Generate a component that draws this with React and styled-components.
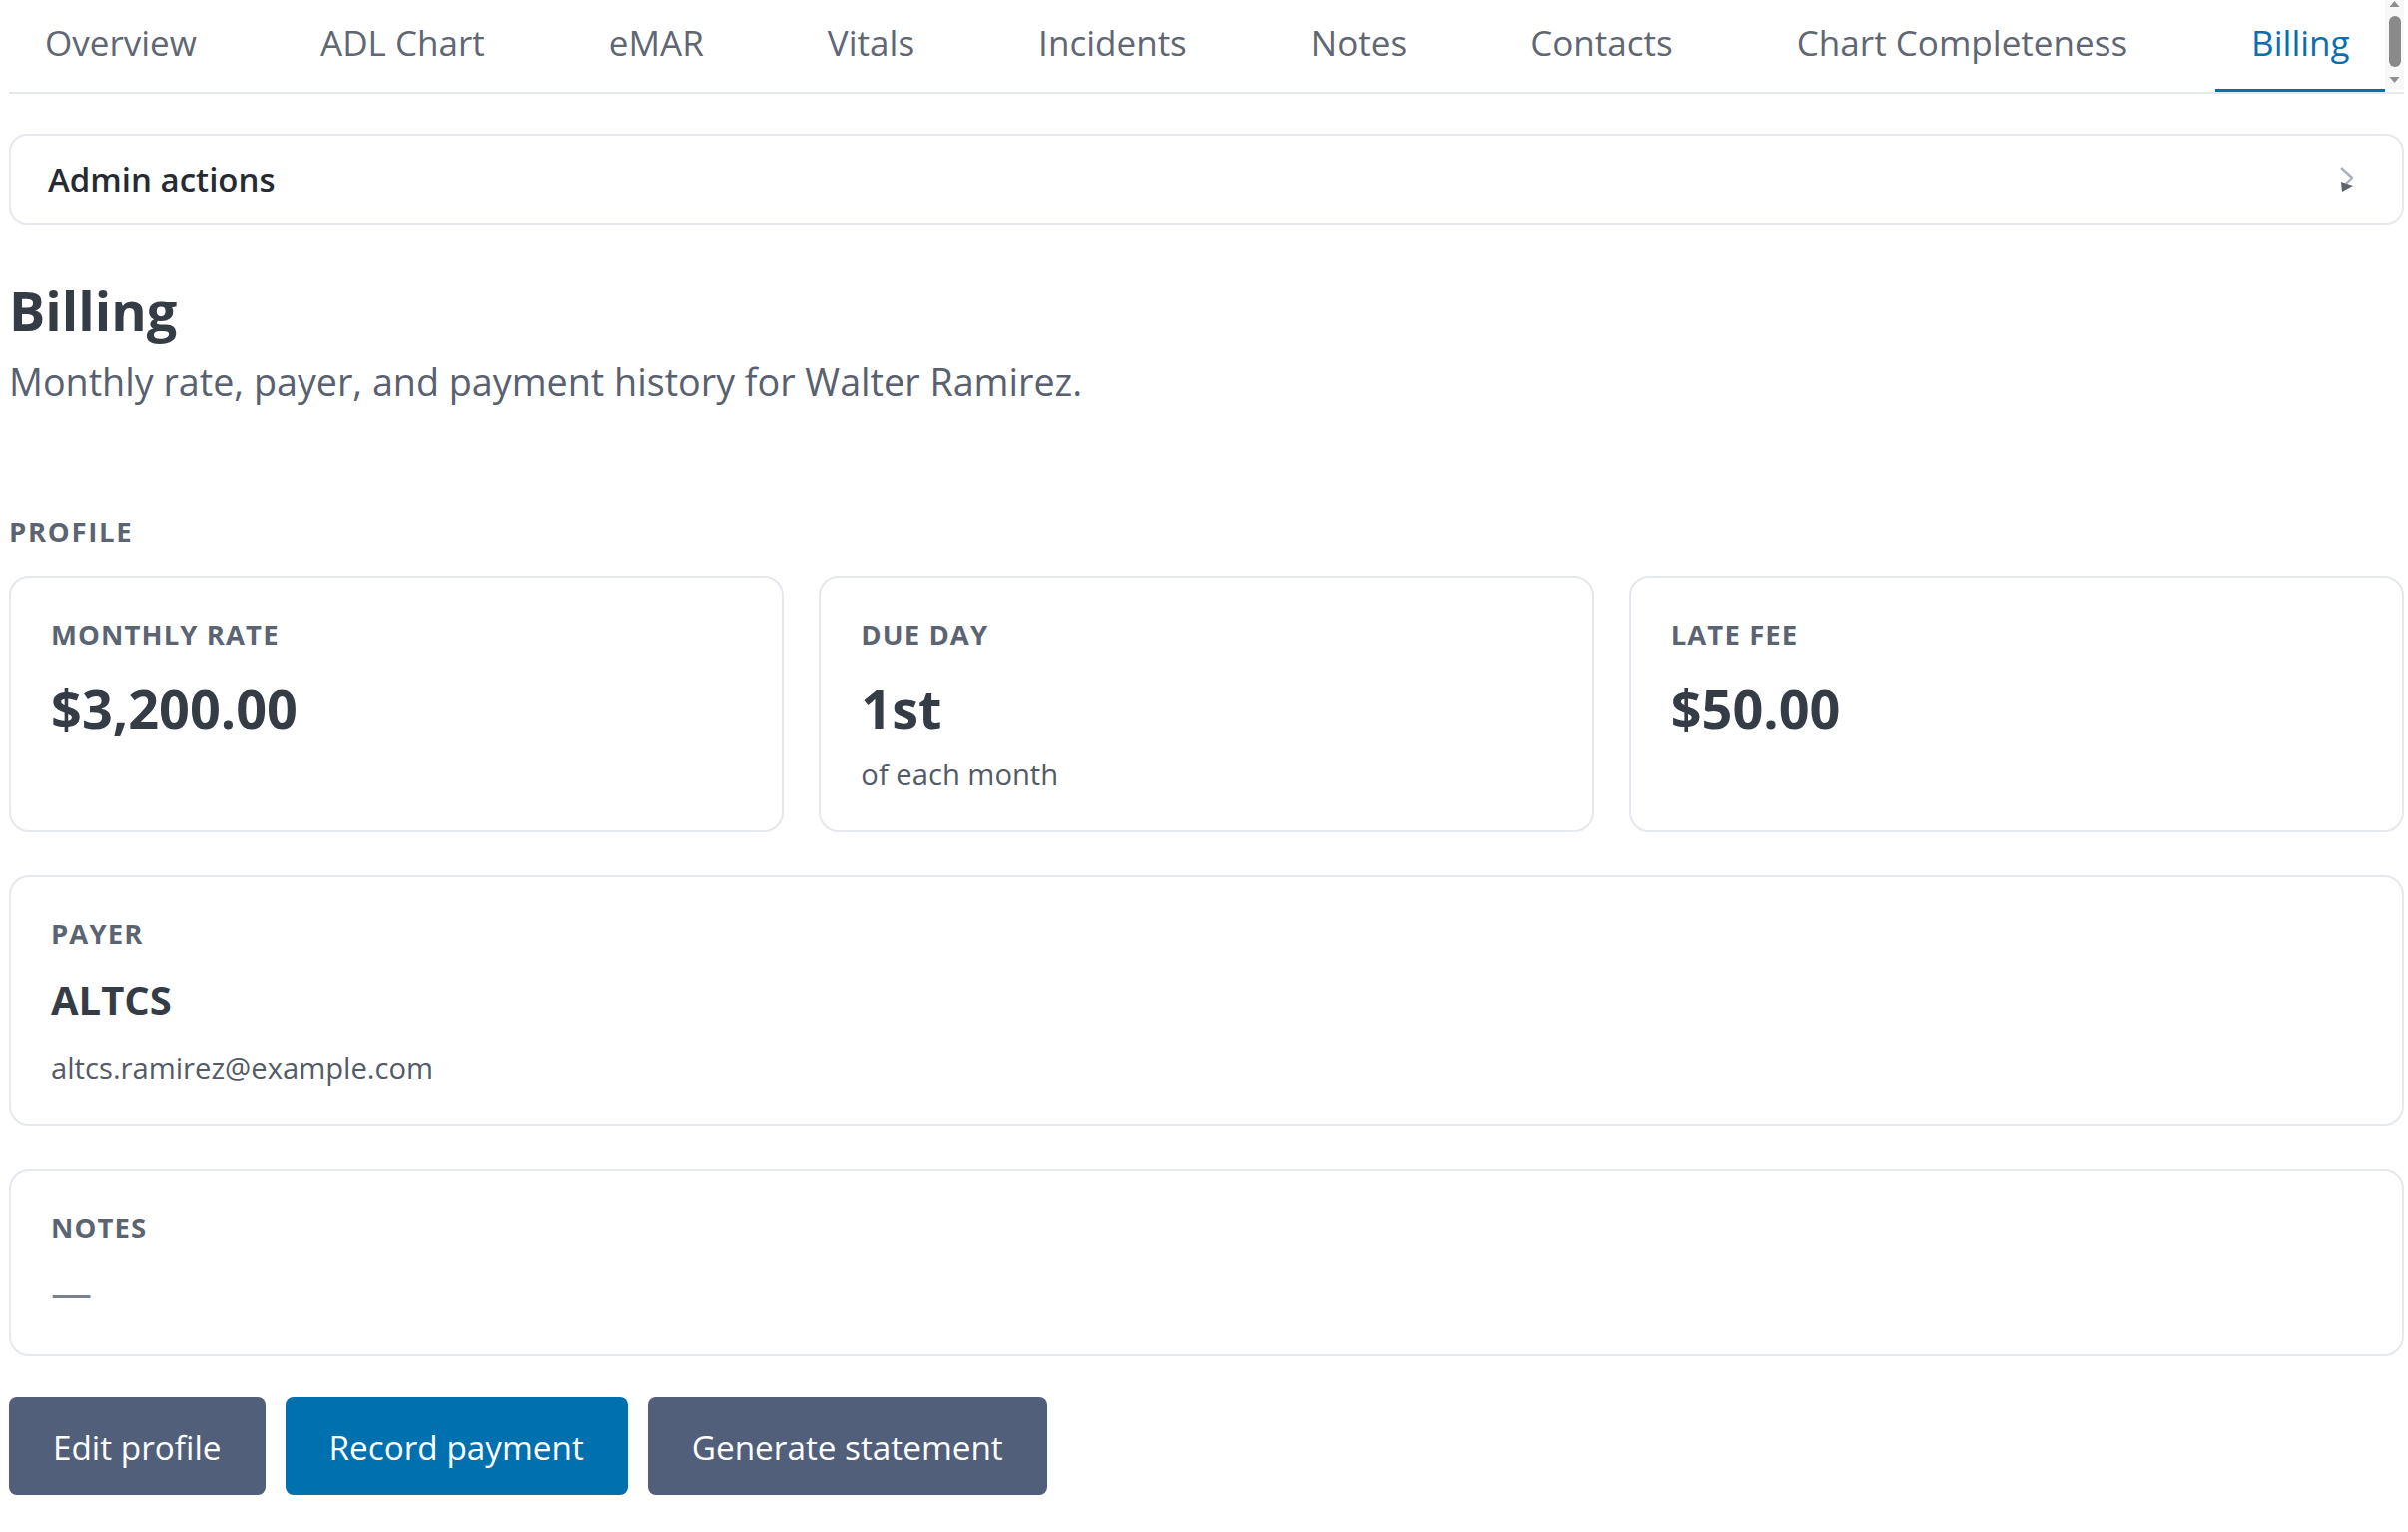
import React from 'react';
import styled, { createGlobalStyle } from 'styled-components';

const GlobalStyle = createGlobalStyle`
  html, body {
    margin: 0;
    padding: 0;
    background: #ffffff;
    overflow: hidden;
  }
  * {
    box-sizing: border-box;
  }
`;

const Page = styled.div`
  padding: 0 4px 16px 9px;
  font-family: "Open Sans", "Noto Sans", sans-serif;
  color: #363c46;
`;

const TabBar = styled.nav`
  display: flex;
  align-items: flex-start;
  height: 94px;
  border-bottom: 2px solid #e5e8ed;
`;

const TabList = styled.div`
  flex: 1;
  display: flex;
  gap: 52px;
  overflow: hidden;
`;

const Tab = styled.a`
  flex-shrink: 0;
  height: 92px;
  padding: 0 36px 4px;
  font-size: 35.05px;
  line-height: 85px;
  white-space: nowrap;
  text-decoration: none;
  cursor: pointer;
  color: ${(p) => (p.$active ? '#0a6fae' : '#5f6674')};
  border-bottom: 3px solid ${(p) => (p.$active ? '#0a6fae' : 'transparent')};
`;

const ScrollRail = styled.svg`
  flex-shrink: 0;
  display: block;
  width: 19px;
  height: 90px;
`;

const AdminCard = styled.div`
  margin-top: 40px;
  display: flex;
  align-items: center;
  justify-content: space-between;
  padding: 1px 48px 0 37px;
  border: 2px solid #e5e8ed;
  border-radius: 18px;
  background: #fff;
`;

const AdminTitle = styled.span`
  font-size: 33px;
  font-weight: 600;
  line-height: 86px;
  color: #262b33;
`;

const Header = styled.header`
  margin-top: 55px;
`;

const Title = styled.h1`
  margin: 0;
  font-size: 54px;
  font-weight: 700;
  line-height: 62px;
  color: #363c46;
`;

const Subtitle = styled.p`
  margin: 15px 0 0;
  font-size: 37.7px;
  line-height: 52px;
  color: #596170;
`;

const SectionLabel = styled.h2`
  margin: 106px 0 0;
  font-size: 27.5px;
  font-weight: 700;
  line-height: 35px;
  letter-spacing: 1.7px;
  text-transform: uppercase;
  color: #5b6472;
`;

const Stack = styled.div`
  margin-top: 27px;
  display: flex;
  flex-direction: column;
  gap: 43px;
`;

const StatGrid = styled.div`
  display: grid;
  grid-template-columns: repeat(3, 1fr);
  gap: 35px;
`;

const Card = styled.section`
  display: flex;
  flex-direction: column;
  padding: 39px 40px 34px;
  border: 2px solid #e5e8ed;
  border-radius: 20px;
  background: #fff;
`;

const FieldLabel = styled.div`
  font-size: 27.5px;
  font-weight: 700;
  line-height: 35px;
  letter-spacing: 1.1px;
  text-transform: uppercase;
  color: #5b6472;
`;

const FieldValue = styled.div`
  margin-top: 24px;
  font-size: ${(p) => (p.$small ? '40px' : '54px')};
  line-height: ${(p) => (p.$small ? '49px' : '64px')};
  font-weight: 700;
  color: #363c46;
`;

const FieldSub = styled.div`
  margin-top: ${(p) => p.$gap || 14}px;
  font-size: 29.2px;
  line-height: 43px;
  color: #535b68;
`;

const EmptyValue = styled.div`
  margin-top: 18px;
  font-size: 41px;
  line-height: 58px;
  color: #7b828e;
`;

const ButtonRow = styled.div`
  margin-top: -2px;
  display: flex;
  gap: 20px;
`;

const ActionButton = styled.button`
  height: 98px;
  padding: 2px 44px 0;
  border: none;
  border-radius: 8px;
  font-family: inherit;
  font-size: 33.3px;
  line-height: 96px;
  color: #ffffff;
  cursor: pointer;
  background: ${(p) => (p.$primary ? '#0071ae' : '#525f7a')};
`;

const tabs = [
  'Overview',
  'ADL Chart',
  'eMAR',
  'Vitals',
  'Incidents',
  'Notes',
  'Contacts',
  'Chart Completeness',
  'Billing',
];

const stats = [
  { label: 'Monthly rate', value: '$3,200.00' },
  { label: 'Due day', value: '1st', sub: 'of each month' },
  { label: 'Late fee', value: '$50.00' },
];

function Chevron() {
  return (
    <svg width="14" height="26" viewBox="0 0 14 26" aria-hidden="true">
      <polyline
        points="1,1 12,11 6,17"
        fill="none"
        stroke="#a9b0bd"
        strokeWidth="2.4"
        strokeLinejoin="round"
      />
      <polygon points="1,15 13,19 2,25" fill="#5f636b" />
    </svg>
  );
}

// the tab strip's own little vertical scrollbar
function TabScrollbar() {
  return (
    <ScrollRail viewBox="0 0 19 90" aria-hidden="true">
      <rect x="0" y="0" width="19" height="90" fill="#f8f8f8" />
      <polygon points="4.5,7 9.5,1 14.5,7" fill="#8f8f8f" />
      <rect x="4" y="16" width="12" height="51" rx="6" fill="#8a8a8a" />
      <polygon points="4.5,77 14.5,77 9.5,83" fill="#8f8f8f" />
    </ScrollRail>
  );
}

export default function App() {
  return (
    <Page>
      <GlobalStyle />
      <TabBar>
        <TabList>
          {tabs.map((t) => (
            <Tab key={t} $active={t === 'Billing'}>
              {t}
            </Tab>
          ))}
        </TabList>
        <TabScrollbar />
      </TabBar>

      <AdminCard>
        <AdminTitle>Admin actions</AdminTitle>
        <Chevron />
      </AdminCard>

      <Header>
        <Title>Billing</Title>
        <Subtitle>Monthly rate, payer, and payment history for Walter Ramirez.</Subtitle>
      </Header>

      <SectionLabel>Profile</SectionLabel>

      <Stack>
        <StatGrid>
          {stats.map((s) => (
            <Card key={s.label}>
              <FieldLabel>{s.label}</FieldLabel>
              <FieldValue>{s.value}</FieldValue>
              {s.sub && <FieldSub>{s.sub}</FieldSub>}
            </Card>
          ))}
        </StatGrid>

        <Card>
          <FieldLabel>Payer</FieldLabel>
          <FieldValue $small>ALTCS</FieldValue>
          <FieldSub $gap={23}>altcs.ramirez@example.com</FieldSub>
        </Card>

        <Card>
          <FieldLabel>Notes</FieldLabel>
          <EmptyValue>—</EmptyValue>
        </Card>

        <ButtonRow>
          <ActionButton>Edit profile</ActionButton>
          <ActionButton $primary>Record payment</ActionButton>
          <ActionButton>Generate statement</ActionButton>
        </ButtonRow>
      </Stack>
    </Page>
  );
}
